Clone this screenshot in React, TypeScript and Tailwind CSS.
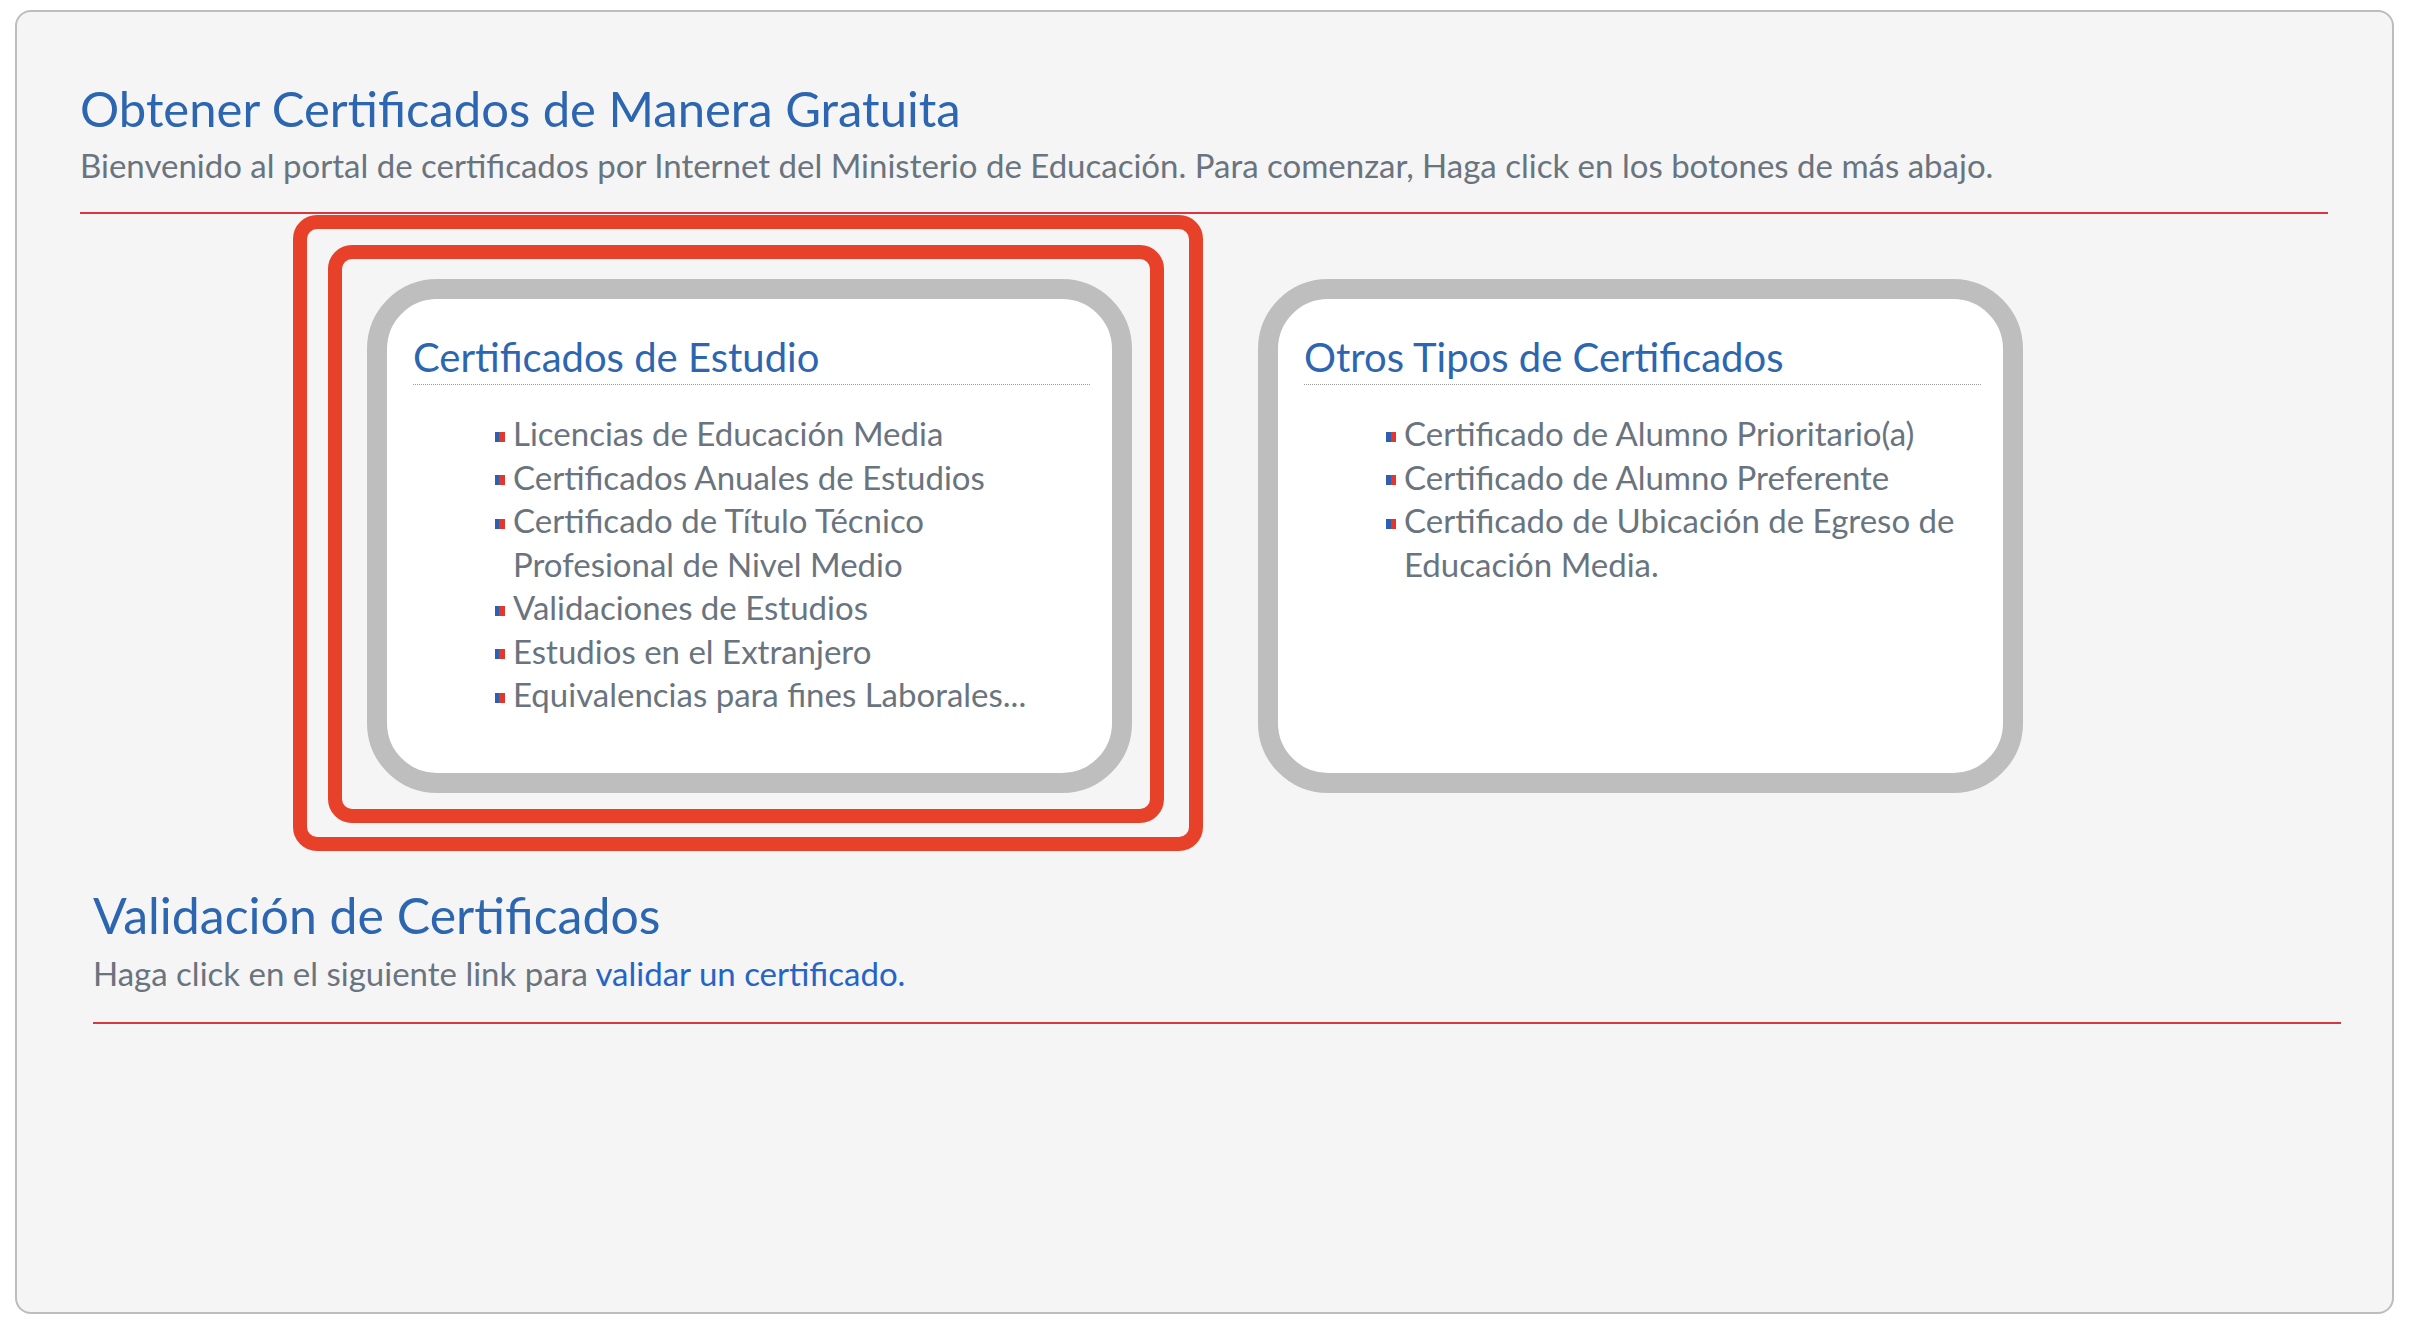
import React from "react";

const estudios = [
  "Licencias de Educación Media",
  "Certificados Anuales de Estudios",
  "Certificado de Título Técnico Profesional de Nivel Medio",
  "Validaciones de Estudios",
  "Estudios en el Extranjero",
  "Equivalencias para fines Laborales...",
];

const otros = [
  "Certificado de Alumno Prioritario(a)",
  "Certificado de Alumno Preferente",
  "Certificado de Ubicación de Egreso de Educación Media.",
];

function CertCard({ title, items }: { title: string; items: string[] }) {
  return (
    <div className="h-[514px] w-[765px] rounded-[70px] border-[20px] border-[#bebebe] bg-white pt-[34px] pl-[26px] pr-[22px]">
      <h2 className="border-b border-dotted border-[#9c9c9c] pb-[3px] text-[40px] leading-[1.2] text-[#2c66b0]">
        {title}
      </h2>
      <ul className="mt-[27px] pl-[82px] pr-[12px]">
        {items.map((item) => (
          <li key={item} className="flex text-[33px] leading-[43.5px] text-[#69747e]">
            <span className="mt-[19.5px] mr-[8px] h-[10px] w-[10px] shrink-0 bg-[linear-gradient(to_right,#2d5fb2_45%,#e4372c_45%)]" />
            <span>{item}</span>
          </li>
        ))}
      </ul>
    </div>
  );
}

export default function App() {
  return (
    <div className="min-h-screen bg-white pl-[15px] pt-[10px] font-['Lato',sans-serif]">
      <div className="h-[1304px] w-[2379px] rounded-[16px] border-2 border-[#bdbdbd] bg-[#f5f5f5] pl-[63px] pr-[64px] pt-[67px]">
        {/* encabezado */}
        <section>
          <h1 className="text-[49px] leading-[1.2] text-[#2c66b0]">
            Obtener Certificados de Manera Gratuita
          </h1>
          <p className="mt-[8px] text-[33px] leading-[1.2] text-[#69747e]">
            Bienvenido al portal de certificados por Internet del Ministerio de Educación. Para comenzar, Haga click en los botones de más abajo.
          </p>
          <div className="mt-[27px] h-[2px] bg-[#d8373d]" />
        </section>

        {/* tarjetas */}
        <div className="mt-[65px] flex gap-[126px] pl-[287px]">
          <div className="relative">
            <CertCard title="Certificados de Estudio" items={estudios} />
            {/* marcas rojas sobre la primera tarjeta */}
            <div className="pointer-events-none absolute -top-[64px] -right-[71px] -bottom-[58px] -left-[74px] rounded-[24px] border-[14px] border-[#e8412a]" />
            <div className="pointer-events-none absolute -top-[34px] -right-[32px] -bottom-[30px] -left-[39px] rounded-[24px] border-[14px] border-[#e8412a]" />
          </div>
          <CertCard title="Otros Tipos de Certificados" items={otros} />
        </div>

        {/* validación */}
        <section className="mt-[92px] ml-[13px] mr-[-13px]">
          <h1 className="text-[50px] leading-[1.2] text-[#2c66b0]">
            Validación de Certificados
          </h1>
          <p className="mt-[9px] text-[33px] leading-[1.2] text-[#69747e]">
            Haga click en el siguiente link para{" "}
            <a href="#" className="text-[#2663c6]">
              validar un certificado.
            </a>
          </p>
          <div className="mt-[28px] h-[2px] bg-[#d8373d]" />
        </section>
      </div>
    </div>
  );
}
